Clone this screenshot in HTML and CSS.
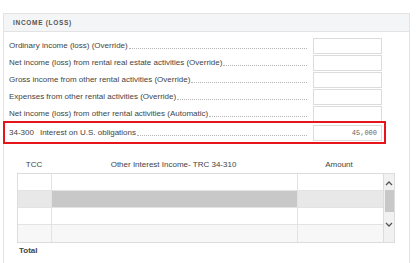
FILE: index.html
```html
<!DOCTYPE html>
<html lang="en">
<head>
    <meta charset="UTF-8">
    <title>Income (Loss)</title>
    <link rel="stylesheet" href="styles.css">
</head>
<body>
    <section class="panel">
        <div class="panel-head">INCOME (LOSS)</div>

        <div class="fields">
            <div class="field">
                <span class="label">Ordinary income (loss) (Override)</span>
                <span class="leader"></span>
                <input type="text" class="amount-input">
            </div>
            <div class="field">
                <span class="label">Net income (loss) from rental real estate activities (Override)</span>
                <span class="leader"></span>
                <input type="text" class="amount-input">
            </div>
            <div class="field">
                <span class="label">Gross income from other rental activities (Override)</span>
                <span class="leader"></span>
                <input type="text" class="amount-input">
            </div>
            <div class="field">
                <span class="label">Expenses from other rental activities (Override)</span>
                <span class="leader"></span>
                <input type="text" class="amount-input">
            </div>
            <div class="field">
                <span class="label">Net income (loss) from other rental activities (Automatic)</span>
                <span class="leader"></span>
                <input type="text" class="amount-input">
            </div>
            <div class="field field-marked">
                <span class="code">34-300</span>
                <span class="label">Interest on U.S. obligations</span>
                <span class="leader"></span>
                <input type="text" class="amount-input" value="45,000">
            </div>
        </div>

        <div class="grid-wrap">
            <div class="grid-head">
                <span class="col-tcc">TCC</span>
                <span class="col-desc">Other Interest Income- TRC 34-310</span>
                <span class="col-amt">Amount</span>
            </div>
            <div class="grid">
                <div class="grid-rows">
                    <div class="grid-row">
                        <span class="col-tcc"></span><span class="col-desc"></span><span class="col-amt"></span>
                    </div>
                    <div class="grid-row row-selected">
                        <span class="col-tcc"></span><span class="col-desc"></span><span class="col-amt"></span>
                    </div>
                    <div class="grid-row">
                        <span class="col-tcc"></span><span class="col-desc"></span><span class="col-amt"></span>
                    </div>
                    <div class="grid-row row-alt">
                        <span class="col-tcc"></span><span class="col-desc"></span><span class="col-amt"></span>
                    </div>
                </div>
                <div class="scrollbar">
                    <svg class="chev" width="8" height="6" viewBox="0 0 8 6"><path d="M1 5 L4 2 L7 5" fill="none" stroke="#555" stroke-width="1.3"/></svg>
                    <div class="thumb"></div>
                    <svg class="chev" width="8" height="6" viewBox="0 0 8 6"><path d="M1 1 L4 4 L7 1" fill="none" stroke="#555" stroke-width="1.3"/></svg>
                </div>
            </div>
            <div class="total">Total</div>
        </div>
    </section>
</body>
</html>
```

FILE: styles.css
```css
body {
    font-family: "Liberation Sans", Arial, sans-serif;
    font-size: 8px;
    color: #444;
    background-color: #fff;
    margin: 0;
    padding: 13px 6px 0 3px;
}
.panel {
    border: 1px solid #e3e3e3;
    border-bottom: none;
    height: 260px;
}
.panel-head {
    height: 17px;
    line-height: 17px;
    padding-left: 9px;
    background-color: #f4f5f7;
    border-bottom: 1px solid #e3e3e3;
    font-size: 6.5px;
    font-weight: bold;
    letter-spacing: 0.7px;
    color: #555;
}
.fields {
    padding-top: 5px;
}
.field {
    display: flex;
    align-items: center;
    height: 17px;
    padding-left: 5px;
    margin-right: 27px;
}
.label {
    white-space: nowrap;
}
.leader {
    flex: 1;
    border-bottom: 1px dotted #b5b5b5;
    margin: 4px 6px 0 1px;
    align-self: center;
    height: 2px;
}
.amount-input {
    width: 69px;
    height: 16px;
    box-sizing: border-box;
    border: 1px solid #dcdcdc;
    padding: 0 4px;
    font-family: "Liberation Mono", "Courier New", monospace;
    font-size: 7px;
    color: #666;
    text-align: right;
    margin: 0;
}
.field-marked {
    outline: 2px solid #e8141b;
    outline-offset: 0;
    margin: 1px 25px 0 1px;
    padding-left: 4px;
    height: 19px;
    padding-right: 2px;
}
.code {
    margin-right: 6px;
}
.grid-wrap {
    padding: 17px 15px 0 13px;
}
.grid-head {
    display: flex;
    height: 12px;
    line-height: 12px;
    margin-bottom: 2px;
}
.grid-head span {
    text-align: center;
}
.col-tcc {
    width: 34px;
    flex: none;
}
.col-desc {
    width: 245px;
    flex: none;
}
.col-amt {
    width: 86px;
    flex: none;
}
.grid {
    display: flex;
    border: 1px solid #dcdcdc;
    width: 376px;
}
.grid-rows {
    flex: none;
}
.grid-row {
    display: flex;
    height: 17px;
    border-bottom: 1px solid #e3e3e3;
    box-sizing: border-box;
}
.grid-row:last-child {
    border-bottom: none;
}
.grid-row span {
    border-left: 1px solid #e3e3e3;
    box-sizing: border-box;
}
.grid-row span:first-child {
    border-left: none;
    width: 33px;
}
.grid-row .col-desc {
    width: 246px;
}
.row-selected {
    background-color: #e8e8e8;
}
.row-selected .col-desc {
    background-color: #c8c8c8;
}
.row-alt {
    background-color: #f7f7f7;
}
.scrollbar {
    width: 11px;
    background-color: #f1f1f1;
    border-left: 1px solid #dcdcdc;
    display: flex;
    flex-direction: column;
    align-items: center;
    padding-top: 6px;
}
.chev {
    display: block;
}
.thumb {
    width: 9px;
    height: 22px;
    background-color: #c8c8c8;
    margin: 4px 0 10px 0;
}
.total {
    font-weight: bold;
    padding: 3px 0 0 2px;
}
```
